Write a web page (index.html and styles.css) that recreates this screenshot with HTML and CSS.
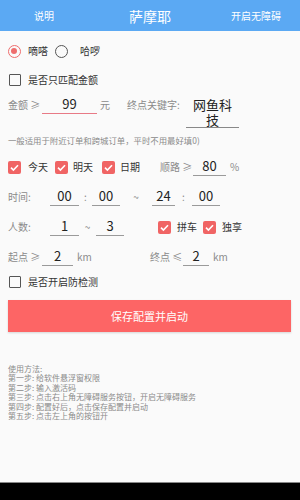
FILE: index.html
```html
<!DOCTYPE html>
<html lang="zh-CN">
<head>
<meta charset="utf-8">
<title>萨摩耶</title>
<link rel="stylesheet" href="styles.css">
</head>
<body>
<div class="page">
  <header class="topbar">
    <span class="top-link">说明</span>
    <span class="top-title">萨摩耶</span>
    <span class="top-link">开启无障碍</span>
  </header>

  <main class="content">
    <div class="row r-radio">
      <span class="radio on"></span><span class="opt">嘀嗒</span>
      <span class="radio ml7"></span><span class="opt ml5">哈啰</span>
    </div>

    <div class="row r-check1">
      <span class="cbox"></span><span class="opt ml7">是否只匹配金额</span>
    </div>

    <div class="row r-amount">
      <span class="lbl w34">金额 ≥</span>
      <span class="inp red w55">99</span>
      <span class="lbl ml3">元</span>
      <span class="lbl ml17 w59">终点关键字:</span>
      <span class="inp-multi w53">网鱼科技</span>
    </div>

    <p class="note">一般适用于附近订单和跨城订单，平时不用最好填0)</p>

    <div class="row r-days">
      <span class="cbox on"><svg viewBox="0 0 13 13"><path d="M3 6.6l2.4 2.4 4.6-4.8" /></svg></span>
      <span class="opt ml7">今天</span>
      <span class="cbox on ml7"><svg viewBox="0 0 13 13"><path d="M3 6.6l2.4 2.4 4.6-4.8" /></svg></span>
      <span class="opt ml5">明天</span>
      <span class="cbox on ml9"><svg viewBox="0 0 13 13"><path d="M3 6.6l2.4 2.4 4.6-4.8" /></svg></span>
      <span class="opt ml5">日期</span>
      <span class="lbl ml20 w33">顺路 ≥</span>
      <span class="inp w33">80</span>
      <span class="lbl ml4">%</span>
    </div>

    <div class="row r-time">
      <span class="lbl w42">时间:</span>
      <span class="inp w29">00</span>
      <span class="sep w13">:</span>
      <span class="inp w28">00</span>
      <span class="sep w32">~</span>
      <span class="inp w23">24</span>
      <span class="sep w17">:</span>
      <span class="inp w28">00</span>
    </div>

    <div class="row r-people">
      <span class="lbl w42">人数:</span>
      <span class="inp w29">1</span>
      <span class="sep w17">~</span>
      <span class="inp w28">3</span>
      <span class="cbox on ml34"><svg viewBox="0 0 13 13"><path d="M3 6.6l2.4 2.4 4.6-4.8" /></svg></span>
      <span class="opt ml6">拼车</span>
      <span class="cbox on ml6"><svg viewBox="0 0 13 13"><path d="M3 6.6l2.4 2.4 4.6-4.8" /></svg></span>
      <span class="opt ml6">独享</span>
    </div>

    <div class="row r-km">
      <span class="lbl w34">起点 ≥</span>
      <span class="inp w31">2</span>
      <span class="lbl ml4 w15">km</span>
      <span class="lbl ml58 w33">终点 ≤</span>
      <span class="inp w26">2</span>
      <span class="lbl ml4">km</span>
    </div>

    <div class="row r-check2">
      <span class="cbox"></span><span class="opt ml7">是否开启防检测</span>
    </div>

    <button class="save">保存配置并启动</button>

    <div class="howto">
      <p>使用方法:</p>
      <p>第一步: 给软件悬浮窗权限</p>
      <p>第二步: 输入激活码</p>
      <p>第三步: 点击右上角无障碍服务按钮，开启无障碍服务</p>
      <p>第四步: 配置好后，点击保存配置并启动</p>
      <p>第五步: 点击左上角的按钮开</p>
    </div>
  </main>

  <footer class="navbar"></footer>
</div>
</body>
</html>
```

FILE: styles.css
```css
* { box-sizing: border-box; }
html, body { margin: 0; padding: 0; }
body {
  font-family: "Noto Sans CJK SC", "Noto Sans", sans-serif;
  background: #fafafa;
  color: #333;
}
.page {
  width: 300px;
  height: 500px;
  display: flex;
  flex-direction: column;
}
.topbar {
  height: 31px;
  background: #5ba9f3;
  display: grid;
  grid-template-columns: 88px 1fr 88px;
  align-items: center;
  color: #fff;
  flex: none;
}
.top-link { font-size: 10px; text-align: center; }
.top-title { font-size: 14px; text-align: center; }

.content {
  flex: 1;
  padding: 0 8px;
}
.row {
  display: flex;
  align-items: center;
  height: 20px;
  white-space: nowrap;
}
.r-radio { height: 24px; margin-top: 8px; }
.r-check1 { margin-top: 7px; margin-left: 1px; }
.r-amount { align-items: flex-start; height: 34px; margin-top: 5px; }
.r-days { margin-top: 0; }
.r-time { margin-top: 10px; }
.r-people { margin-top: 10px; }
.r-km { margin-top: 10px; }
.r-check2 { margin-top: 5px; margin-left: 1px; }

.lbl {
  font-size: 10px;
  color: #8a8a8a;
  line-height: 20px;
}
.opt {
  font-size: 10px;
  color: #333;
  line-height: 20px;
}
.sep {
  font-size: 10px;
  color: #8a8a8a;
  text-align: center;
  line-height: 20px;
}
.inp {
  font-size: 13px;
  color: #222;
  text-align: center;
  line-height: 18px;
  height: 19px;
  border-bottom: 1px solid #9a9a9a;
  align-self: flex-start;
}
.inp.red { border-bottom-color: #e87a86; }
.inp-multi {
  font-size: 13px;
  color: #222;
  text-align: center;
  line-height: 15px;
  padding: 2px 6px 0;
  height: 33px;
  border-bottom: 1px solid #888;
  white-space: normal;
  word-break: break-all;
}
.note {
  margin: 5px 0 11px;
  font-size: 8.4px;
  line-height: 12px;
  color: #8a8a8a;
  white-space: nowrap;
}

.radio {
  width: 13px;
  height: 13px;
  border-radius: 50%;
  border: 1.5px solid #555;
  flex: none;
  margin-right: 7px;
  position: relative;
}
.radio.on { border-color: #ee6d6d; }
.radio.on::after {
  content: "";
  position: absolute;
  left: 2px; top: 2px;
  width: 6px; height: 6px;
  border-radius: 50%;
  background: #ee6d6d;
}
.cbox {
  width: 12px;
  height: 12px;
  border: 1.5px solid #555;
  border-radius: 1px;
  flex: none;
}
.cbox.on {
  width: 13px;
  height: 13px;
  border: none;
  border-radius: 2px;
  background: #f06464;
}
.cbox svg { display: block; width: 13px; height: 13px; }
.cbox path { fill: none; stroke: #fff; stroke-width: 1.6; }

.save {
  display: block;
  width: 283px;
  height: 32px;
  margin: 8px 0 0;
  border: none;
  background: #fd6565;
  color: #fff;
  font-family: inherit;
  font-size: 11px;
  box-shadow: 0 1px 2px rgba(0,0,0,0.15);
  padding: 0;
}
.howto {
  margin-top: 32px;
  font-size: 8px;
  line-height: 9.4px;
  color: #8a8a8a;
}
.howto p { margin: 0; white-space: nowrap; }

.navbar {
  height: 18px;
  flex: none;
  background: #000;
  border-top: 1px solid #888;
}

.w13 { width: 13px; } .w15 { width: 15px; } .w17 { width: 17px; }
.w23 { width: 23px; } .w26 { width: 26px; } .w28 { width: 28px; }
.w29 { width: 29px; } .w31 { width: 31px; } .w32 { width: 32px; }
.w33 { width: 33px; } .w34 { width: 34px; } .w42 { width: 42px; }
.w53 { width: 53px; } .w55 { width: 55px; } .w59 { width: 59px; }
.ml3 { margin-left: 3px; } .ml4 { margin-left: 4px; } .ml5 { margin-left: 5px; }
.ml6 { margin-left: 6px; } .ml7 { margin-left: 7px; } .ml9 { margin-left: 9px; }
.ml17 { margin-left: 17px; } .ml20 { margin-left: 20px; } .ml34 { margin-left: 34px; }
.ml58 { margin-left: 58px; }
```
